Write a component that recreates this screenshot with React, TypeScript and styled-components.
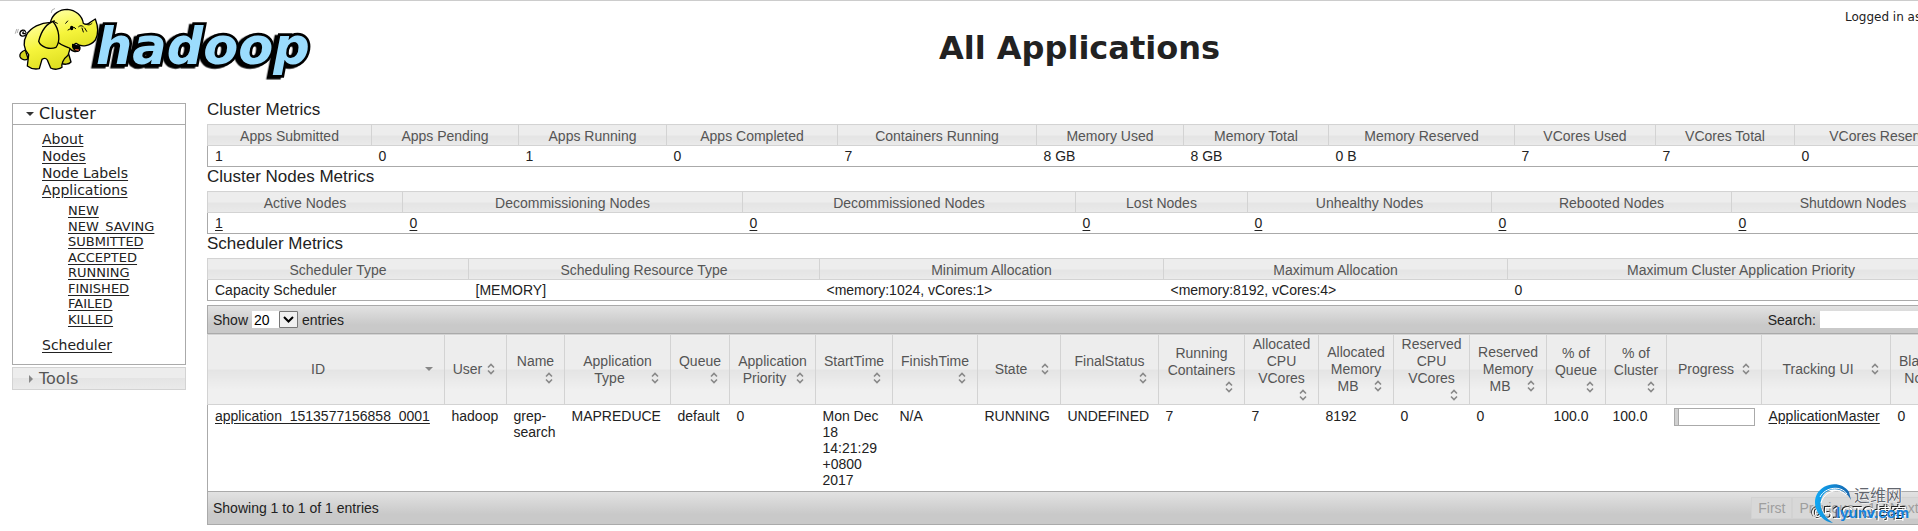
import React from "react";
import styled, { createGlobalStyle, css } from "styled-components";

const sans = `"Liberation Sans", Arial, sans-serif`;
const verdana = `"DejaVu Sans", Verdana, sans-serif`;

const GlobalStyle = createGlobalStyle`
  *, *::before, *::after { box-sizing: border-box; }
  body { margin: 0; background: #fff; color: #222; font: 14px/16px ${sans}; }
  button, input, select { font: inherit; color: inherit; }
  a { color: inherit; text-underline-offset: 2px; }
`;

const glass = css`
  background: linear-gradient(#ededed 50%, #e4e4e4 50%, #f0f0f0 calc(50% + 20px));
`;

const Viewport = styled.div`
  position: relative;
  overflow: hidden;
  border-top: 1px solid #ccc;
`;

const Page = styled.div`
  min-width: 1984px;
  padding: 0 10px 6px 12px;
`;

const Header = styled.header`
  display: flex;
  height: 99px;
`;

const Title = styled.h1`
  flex: 1;
  margin: 0;
  padding-top: 27px;
  text-align: center;
  font: bold 32px/40px ${verdana};
`;

const User = styled.div`
  width: 129px;
  padding-top: 8px;
  font: 12px/16px ${verdana};
  white-space: nowrap;
`;

const Columns = styled.div`
  display: flex;
  align-items: flex-start;
  gap: 21px;
`;

const Nav = styled.nav`
  flex: none;
  width: 174px;
  margin-top: 3px;
  font-family: ${verdana};
`;

const NavHeading = styled.button<{ $open?: boolean }>`
  display: flex;
  align-items: center;
  gap: 5px;
  width: 100%;
  height: ${(p) => (p.$open ? 22 : 23)}px;
  margin-top: ${(p) => (p.$open ? 0 : 2)}px;
  padding: 0 0 0 10px;
  border: 1px solid ${(p) => (p.$open ? "#aaa" : "#d3d3d3")};
  font-size: 16px;
  line-height: 20px;
  color: ${(p) => (p.$open ? "#212121" : "#555")};
  ${(p) => (p.$open ? "background: #fff;" : glass)}
`;

const NavPanel = styled.div`
  padding: 6px 0 10px 29px;
  border: 1px solid #aaa;
  border-top: 0;
`;

const NavList = styled.ul`
  margin: 0;
  padding: 0;
  list-style: none;
  font-size: 14px;
  line-height: 17px;
`;

const SubList = styled.ul`
  display: grid;
  grid-auto-rows: 1fr;
  height: 124px;
  margin: 4px 0 10px;
  padding: 0 0 0 26px;
  list-style: none;
  font-size: 13px;
  line-height: 15px;
`;

const Main = styled.main`
  flex: 1;
  min-width: 0;
`;

const SectionTitle = styled.h2`
  margin: 0;
  padding: 0 0 4px;
  font-size: 17px;
  line-height: 20px;
  font-weight: normal;
`;

const Table = styled.table`
  width: 100%;
  table-layout: fixed;
  border-collapse: collapse;
  border: 1px solid #aaa;
`;

const Th = styled.th`
  ${glass}
  padding: 3px 7px 1px;
  border: 1px solid #d3d3d3;
  color: #555;
  font-weight: normal;
  white-space: nowrap;
`;

const Td = styled.td`
  padding: 2px 7px;
`;

const Apps = styled.section`
  margin-top: 4px;
`;

const Bar = styled.div<{ $foot?: boolean }>`
  display: flex;
  align-items: center;
  justify-content: space-between;
  height: ${(p) => (p.$foot ? 34 : 29)}px;
  padding: 0 ${(p) => (p.$foot ? 7 : 3)}px 0 5px;
  border: 1px solid #aaa;
  background: linear-gradient(#e2e2e2, #c9c9c9 70%);
`;

const Field = styled.label`
  display: flex;
  align-items: center;
  gap: 4px;
`;

const SelectBox = styled.span`
  position: relative;
  display: flex;
  svg { position: absolute; right: 0; top: 0; pointer-events: none; }
`;

const Select = styled.select`
  appearance: none;
  width: 46px;
  height: 17px;
  padding: 0 2px;
  border: 0;
  border-radius: 0;
  background: #fff;
  color: #000;
  line-height: 16px;
`;

const Search = styled.input`
  width: 150px;
  height: 17px;
  padding: 0 2px;
  border: 0;
  background: #fff;
`;

const AppsTable = styled(Table)`
  border-width: 0 1px;
`;

const AppTh = styled(Th)`
  height: 70px;
  padding: 1px 7px;
  white-space: normal;
`;

const SortButton = styled.button`
  display: block;
  width: 100%;
  padding: 0;
  border: 0;
  background: none;
  line-height: 17px;
  svg { float: right; }
`;

const AppTd = styled.td`
  padding: 3px 7px;
  vertical-align: top;
`;

const Progress = styled.div`
  height: 18px;
  border: 1px solid #aaa;
`;

const ProgressValue = styled.div`
  height: 100%;
  border-right: 1px solid #aaa;
  background: #d0d0d0;
`;

const Pager = styled.div`
  display: flex;
`;

const PageButton = styled.button`
  height: 22px;
  padding: 0 6px;
  border: 1px solid #d2d2d2;
  background: #d8d8d8;
  color: #9e9e9e;
`;

const Wordmark = styled.text`
  filter: drop-shadow(-10px 5px 0 #000);
`;

const ShadedText = styled.text`
  filter: drop-shadow(-1px -1px 0 #222);
`;

const Watermark = styled.div`
  position: absolute;
  right: 5px;
  bottom: 6px;
  width: 102px;
  height: 42px;
  pointer-events: none;
  svg { display: block; }
`;

const Caret = ({ open = false }: { open?: boolean }) => (
  <svg width="11" height="12" viewBox="0 0 11 12" aria-hidden="true">
    {open ? <path d="M3 4h8L7 8z" fill="#333" /> : <path d="M6 2v8l4-4z" fill="#888" />}
  </svg>
);

const SortIcon = ({ active }: { active?: boolean }) => (
  <svg width="16" height="16" viewBox="0 0 16 16" aria-hidden="true">
    {active ? (
      <path d="M4 6h8l-4 4z" fill="#888" />
    ) : (
      <path d="M5 6.5l3-3 3 3M5 9.5l3 3 3-3" fill="none" stroke="#888" strokeWidth="1.6" />
    )}
  </svg>
);

const Logo = () => (
  <svg width="302" height="90" viewBox="36 3 906 270" role="img" aria-label="hadoop">
    <defs>
      <linearGradient id="skin" x1="0.3" y1="0" x2="0.6" y2="1">
        <stop offset="0" stopColor="#ffff9a" />
        <stop offset="0.5" stopColor="#f6f53c" />
        <stop offset="1" stopColor="#dede20" />
      </linearGradient>
    </defs>
    <Wordmark
      x="288" y="191" fontFamily="DejaVu Sans" fontWeight="bold" fontStyle="italic" fontSize="153"
      fill="#9bdcfd" stroke="#000" strokeWidth="16" strokeLinejoin="miter" strokeMiterlimit="3" paintOrder="stroke"
    >
      hadoop
    </Wordmark>
    <g stroke="#000" strokeWidth="4" strokeLinejoin="round" strokeLinecap="round" fill="url(#skin)">
      <path d="M78 104C68 112 58 108 60 98C62 90 72 88 76 94M78 98C70 104 66 100 70 96" fill="none" />
      <path d="M190 160L206 162L213 186C206 194 192 194 184 190z" fill="#d3d31c" />
      <path d="M76 150C66 154 58 162 60 170C64 180 76 182 84 176z" fill="#d3d31c" />
      <path d="M152 67C122 68 92 82 80 104C68 126 72 148 86 164L82 198C92 206 108 208 118 206L126 178C132 174 138 174 142 180L152 204C162 210 180 208 186 202C184 194 188 178 204 166L212 140L200 70z" />
      <path d="M152 64C158 42 178 28 202 28C226 30 246 46 250 70C258 76 266 72 272 66L286 57C294 78 296 102 286 120C272 138 244 144 228 130L222 134L238 150C228 160 214 152 208 144C196 138 184 136 176 128C162 112 154 90 152 64z" />
      <path d="M163 63C140 70 124 92 116 124C122 142 150 150 168 142C182 124 178 88 160 66z" />
      <path d="M218 133C216 142 222 152 232 154C240 152 242 144 238 138C232 138 224 136 218 133z" fill="#000" />
      <path d="M227 149l8 1" stroke="#e05030" />
      <g fill="none" strokeWidth="3">
        <path d="M197 70l6-7M204 90l11-6c4-4 10-2 12 2M236 80c4-4 10-4 14 0M246 84l4 12M254 84l6 10M258 72c6 4 12 4 18-2M164 66l8 4" />
      </g>
      <ellipse cx="215" cy="84" rx="3" ry="5" fill="#000" />
      <path d="M154 38l2-8 8-4M46 100l4-12M52 98l3-10" fill="none" stroke="#888" strokeWidth="2" />
    </g>
  </svg>
);

type Column = { label: string; width: number; value: string };

const clusterMetrics: Column[] = [
  { label: "Apps Submitted", width: 164, value: "1" },
  { label: "Apps Pending", width: 147, value: "0" },
  { label: "Apps Running", width: 148, value: "1" },
  { label: "Apps Completed", width: 171, value: "0" },
  { label: "Containers Running", width: 199, value: "7" },
  { label: "Memory Used", width: 147, value: "8 GB" },
  { label: "Memory Total", width: 145, value: "8 GB" },
  { label: "Memory Reserved", width: 186, value: "0 B" },
  { label: "VCores Used", width: 141, value: "7" },
  { label: "VCores Total", width: 139, value: "7" },
  { label: "VCores Reserved", width: 180, value: "0" },
];

const nodeMetrics: Column[] = [
  { label: "Active Nodes", width: 195, value: "1" },
  { label: "Decommissioning Nodes", width: 340, value: "0" },
  { label: "Decommissioned Nodes", width: 333, value: "0" },
  { label: "Lost Nodes", width: 172, value: "0" },
  { label: "Unhealthy Nodes", width: 244, value: "0" },
  { label: "Rebooted Nodes", width: 240, value: "0" },
  { label: "Shutdown Nodes", width: 243, value: "0" },
];

const schedulerMetrics: Column[] = [
  { label: "Scheduler Type", width: 261, value: "Capacity Scheduler" },
  { label: "Scheduling Resource Type", width: 351, value: "[MEMORY]" },
  { label: "Minimum Allocation", width: 344, value: "<memory:1024, vCores:1>" },
  { label: "Maximum Allocation", width: 344, value: "<memory:8192, vCores:4>" },
  { label: "Maximum Cluster Application Priority", width: 467, value: "0" },
];

const appColumns: Column[] = [
  { label: "ID", width: 237, value: "application_1513577156858_0001" },
  { label: "User", width: 62, value: "hadoop" },
  { label: "Name", width: 58, value: "grep-search" },
  { label: "Application Type", width: 106, value: "MAPREDUCE" },
  { label: "Queue", width: 59, value: "default" },
  { label: "Application Priority", width: 86, value: "0" },
  { label: "StartTime", width: 77, value: "Mon Dec 18 14:21:29 +0800 2017" },
  { label: "FinishTime", width: 85, value: "N/A" },
  { label: "State", width: 83, value: "RUNNING" },
  { label: "FinalStatus", width: 98, value: "UNDEFINED" },
  { label: "Running Containers", width: 86, value: "7" },
  { label: "Allocated CPU VCores", width: 74, value: "7" },
  { label: "Allocated Memory MB", width: 75, value: "8192" },
  { label: "Reserved CPU VCores", width: 76, value: "0" },
  { label: "Reserved Memory MB", width: 77, value: "0" },
  { label: "% of Queue", width: 59, value: "100.0" },
  { label: "% of Cluster", width: 61, value: "100.0" },
  { label: "Progress", width: 95, value: "6" },
  { label: "Tracking UI", width: 129, value: "ApplicationMaster" },
  { label: "Blacklisted Nodes", width: 84, value: "0" },
];

const linked = ["ID", "Tracking UI"];
const states = ["NEW", "NEW_SAVING", "SUBMITTED", "ACCEPTED", "RUNNING", "FINISHED", "FAILED", "KILLED"];

const Cols = ({ columns }: { columns: Column[] }) => (
  <colgroup>
    {columns.map((c) => (
      <col key={c.label} style={{ width: c.width }} />
    ))}
  </colgroup>
);

const Metrics = ({ title, columns, links }: { title: string; columns: Column[]; links?: boolean }) => (
  <section>
    <SectionTitle>{title}</SectionTitle>
    <Table aria-label={title}>
      <Cols columns={columns} />
      <thead>
        <tr>{columns.map((c) => <Th key={c.label}>{c.label}</Th>)}</tr>
      </thead>
      <tbody>
        <tr>
          {columns.map((c) => (
            <Td key={c.label}>{links ? <a href="#nodes">{c.value}</a> : c.value}</Td>
          ))}
        </tr>
      </tbody>
    </Table>
  </section>
);

const Cell = ({ column }: { column: Column }) => {
  if (column.label === "Progress")
    return (
      <Progress role="progressbar" aria-label="Progress" aria-valuenow={Number(column.value)}>
        <ProgressValue style={{ width: `${column.value}%` }} />
      </Progress>
    );
  return linked.includes(column.label) ? <a href="#app">{column.value}</a> : <>{column.value}</>;
};

export default function App() {
  return (
    <Viewport>
      <GlobalStyle />
      <Page>
        <Header>
          <Logo />
          <Title>All Applications</Title>
          <User>Logged in as</User>
        </Header>
        <Columns>
          <Nav>
            <NavHeading $open aria-expanded="true"><Caret open />Cluster</NavHeading>
            <NavPanel>
              <NavList>
                <li><a href="#about">About</a></li>
                <li><a href="#nodes">Nodes</a></li>
                <li><a href="#labels">Node Labels</a></li>
                <li>
                  <a href="#apps">Applications</a>
                  <SubList>
                    {states.map((s) => <li key={s}><a href={`#${s}`}>{s}</a></li>)}
                  </SubList>
                </li>
                <li><a href="#scheduler">Scheduler</a></li>
              </NavList>
            </NavPanel>
            <NavHeading aria-expanded="false"><Caret />Tools</NavHeading>
          </Nav>
          <Main>
            <Metrics title="Cluster Metrics" columns={clusterMetrics} />
            <Metrics title="Cluster Nodes Metrics" columns={nodeMetrics} links />
            <Metrics title="Scheduler Metrics" columns={schedulerMetrics} />
            <Apps>
              <Bar>
                <Field>
                  Show
                  <SelectBox>
                    <Select defaultValue="20" aria-label="Entries per page"><option>20</option><option>40</option></Select>
                    <svg width="19" height="17" viewBox="0 0 19 17" aria-hidden="true">
                      <path d="M.5 .5h18v16H.5z" fill="#f0f0f0" stroke="#777" />
                      <path d="M5 6l4.500 4.500L14 6" fill="none" stroke="#000" strokeWidth="2" />
                    </svg>
                  </SelectBox>
                  entries
                </Field>
                <Field>Search:<Search type="text" /></Field>
              </Bar>
              <AppsTable aria-label="Applications">
                <Cols columns={appColumns} />
                <thead>
                  <tr>
                    {appColumns.map((c) => (
                      <AppTh key={c.label}>
                        <SortButton>{c.label}<SortIcon active={c.label === "ID"} /></SortButton>
                      </AppTh>
                    ))}
                  </tr>
                </thead>
                <tbody>
                  <tr>
                    {appColumns.map((c) => <AppTd key={c.label}><Cell column={c} /></AppTd>)}
                  </tr>
                </tbody>
              </AppsTable>
              <Bar $foot>
                <span>Showing 1 to 1 of 1 entries</span>
                <Pager>
                  {["First", "Previous", "1", "Next", "Last"].map((p) => (
                    <PageButton key={p} disabled>{p}</PageButton>
                  ))}
                </Pager>
              </Bar>
            </Apps>
          </Main>
        </Columns>
      </Page>
      <Watermark>
        <svg width="102" height="42" viewBox="0 0 102 42">
          <defs>
            <linearGradient id="swoosh" x1="0" y1="0" x2="1" y2="0">
              <stop offset="0" stopColor="#10a8f4" />
              <stop offset="1" stopColor="#1565ae" />
            </linearGradient>
          </defs>
          <ShadedText x="1" y="36" fontFamily="Liberation Sans, Noto Sans CJK SC, sans-serif" fontSize="16" fill="#fff">
            ©51CTO博客
          </ShadedText>
          <path d="M22 40C8 38 0 22 6 11C12 0 30 -3 38 9L40 17C34 5 20 3 13 11C6 20 10 32 22 40z" fill="url(#swoosh)" />
          <path d="M9 14C14 4 30 2 36 11M10 20C13 8 28 4 35 12" fill="none" stroke="#fff" strokeWidth="1" />
          <text x="43" y="18" fontFamily="Noto Sans CJK SC, sans-serif" fontSize="16" fill="#62666e" stroke="#fff" strokeWidth="1" paintOrder="stroke">运维网</text>
          <text x="25" y="35" fontFamily="Liberation Sans, sans-serif" fontSize="15" fontWeight="bold" fill="#1482dc">lyunv.com</text>
        </svg>
      </Watermark>
    </Viewport>
  );
}
